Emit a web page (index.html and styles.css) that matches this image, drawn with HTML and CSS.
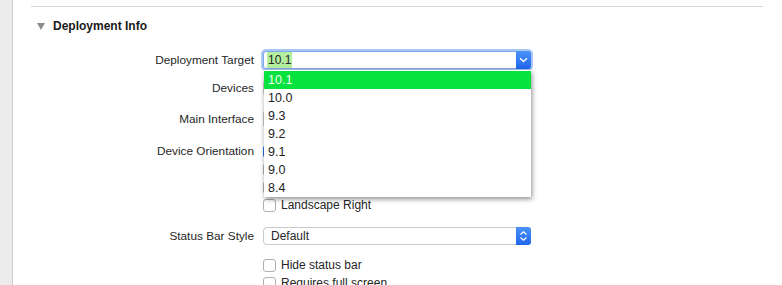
FILE: index.html
```html
<!DOCTYPE html>
<html lang="en">
<head>
  <meta charset="UTF-8" />
  <title>Deployment Info</title>
  <link rel="stylesheet" href="styles.css">
</head>
<body>

  <div class="sidebar"></div>

  <main>
    <div class="rule"></div>

    <div class="section-head">
      <span class="disclosure"></span>
      <span class="section-title">Deployment Info</span>
    </div>

    <div class="row row-target">
      <div class="label">Deployment Target</div>
      <div class="combo focused">
        <span class="combo-text"><span class="selected-text">10.1</span></span>
        <span class="combo-btn">
          <svg width="9" height="6" viewBox="0 0 9 6"><path d="M1 1.2 L4.5 4.6 L8 1.2" fill="none" stroke="#fff" stroke-width="1.4"/></svg>
        </span>

        <ul class="menu">
          <li class="active">10.1</li>
          <li>10.0</li>
          <li>9.3</li>
          <li>9.2</li>
          <li>9.1</li>
          <li>9.0</li>
          <li>8.4</li>
        </ul>
      </div>
    </div>

    <!-- controls below are covered by the open menu -->
    <div class="row row-devices">
      <div class="label">Devices</div>
      <div class="popup">
        <span class="popup-text"></span>
        <span class="combo-btn"></span>
      </div>
    </div>

    <div class="row row-main">
      <div class="label">Main Interface</div>
      <div class="combo">
        <span class="combo-text"></span>
        <span class="combo-btn"></span>
      </div>
    </div>

    <div class="row row-orient">
      <div class="label">Device Orientation</div>
      <div class="check"><span class="box checked"></span></div>
    </div>
    <div class="row">
      <div class="label"></div>
      <div class="check"><span class="box"></span></div>
    </div>
    <div class="row">
      <div class="label"></div>
      <div class="check"><span class="box"></span></div>
    </div>
    <div class="row">
      <div class="label"></div>
      <label class="check"><span class="box"></span>Landscape Right</label>
    </div>

    <div class="row row-status">
      <div class="label">Status Bar Style</div>
      <div class="popup">
        <span class="popup-text">Default</span>
        <span class="combo-btn">
          <svg width="9" height="12" viewBox="0 0 9 12"><path d="M1.5 4.5 L4.5 1.8 L7.5 4.5 M1.5 7.5 L4.5 10.2 L7.5 7.5" fill="none" stroke="#fff" stroke-width="1.3"/></svg>
        </span>
      </div>
    </div>

    <div class="row row-hide">
      <div class="label"></div>
      <label class="check"><span class="box"></span>Hide status bar</label>
    </div>
    <div class="row">
      <div class="label"></div>
      <label class="check"><span class="box"></span>Requires full screen</label>
    </div>
  </main>

</body>
</html>
```

FILE: styles.css
```css
* { box-sizing: border-box; }

html, body {
  height: 100%;
}

body {
  margin: 0;
  display: flex;
  background: #fff;
  font-family: 'Liberation Sans', Arial, sans-serif;
  font-size: 12px;
  color: #262626;
  overflow: hidden;
}

.sidebar {
  width: 13px;
  flex: none;
  background: #ececec;
  border-right: 1px solid #cfcfcf;
}

main {
  flex: 1;
  padding: 0 19px 0 18px;
}

.rule {
  margin-top: 6px;
  border-top: 1px solid #d6d6d6;
}

.section-head {
  height: 38px;
  display: flex;
  align-items: center;
  padding-left: 6px;
}

.disclosure {
  width: 0;
  height: 0;
  border-left: 4px solid transparent;
  border-right: 4px solid transparent;
  border-top: 7px solid #8c8c8c;
  margin-right: 8px;
}

.section-title {
  font-weight: bold;
  color: #1a1a1a;
}

.row {
  display: grid;
  grid-template-columns: 223px 268px;
  column-gap: 9px;
  align-items: center;
  height: 18px;
}

.row-target { margin-top: 6px; }
.row-devices { margin-top: 10px; }
.row-main { margin-top: 13px; }
.row-orient { margin-top: 14px; }
.row-status { margin-top: 13px; }
.row-hide { margin-top: 11px; }

.label {
  text-align: right;
  white-space: nowrap;
  font-size: 11.8px;
}

/* combo box */
.combo, .popup {
  position: relative;
  height: 18px;
  display: flex;
  align-items: center;
  background: #fff;
  border: 1px solid #c9c9c9;
  border-radius: 3px;
}

.combo.focused {
  border-color: #7fa9e6;
  box-shadow: 0 0 0 2px #a8c8f3;
}

.combo-text, .popup-text {
  flex: 1;
  padding-left: 3px;
}

.popup {
  border-radius: 4px;
}

.popup-text {
  padding-left: 7px;
}

.selected-text {
  background: #b4ee9f;
  padding: 1px 1px;
}

.combo-btn {
  width: 15px;
  height: 18px;
  margin: -1px -1px -1px 0;
  display: flex;
  align-items: center;
  justify-content: center;
  background: linear-gradient(#4a92f8, #1f66ec);
  border-radius: 0 3px 3px 0;
}

/* open menu */
.menu {
  position: absolute;
  top: 18px;
  left: 0;
  width: 267px;
  margin: 0;
  padding: 1px 0 0;
  list-style: none;
  background: #fff;
  box-shadow: 1px 2px 5px rgba(0, 0, 0, 0.45);
  z-index: 2;
}

.menu li {
  height: 18px;
  line-height: 18px;
  padding-left: 4px;
  font-size: 12.5px;
  color: #222;
}

.menu li.active {
  background: #04e33e;
  color: #f4fff4;
}

/* checkboxes */
.check {
  display: flex;
  align-items: center;
  gap: 5px;
  white-space: nowrap;
}

.box {
  width: 13px;
  height: 13px;
  border: 1px solid #b0b0b0;
  border-radius: 3px;
  background: #fff;
}

.box.checked {
  background: #2f7cf4;
  border-color: #2a6fe0;
}
```
